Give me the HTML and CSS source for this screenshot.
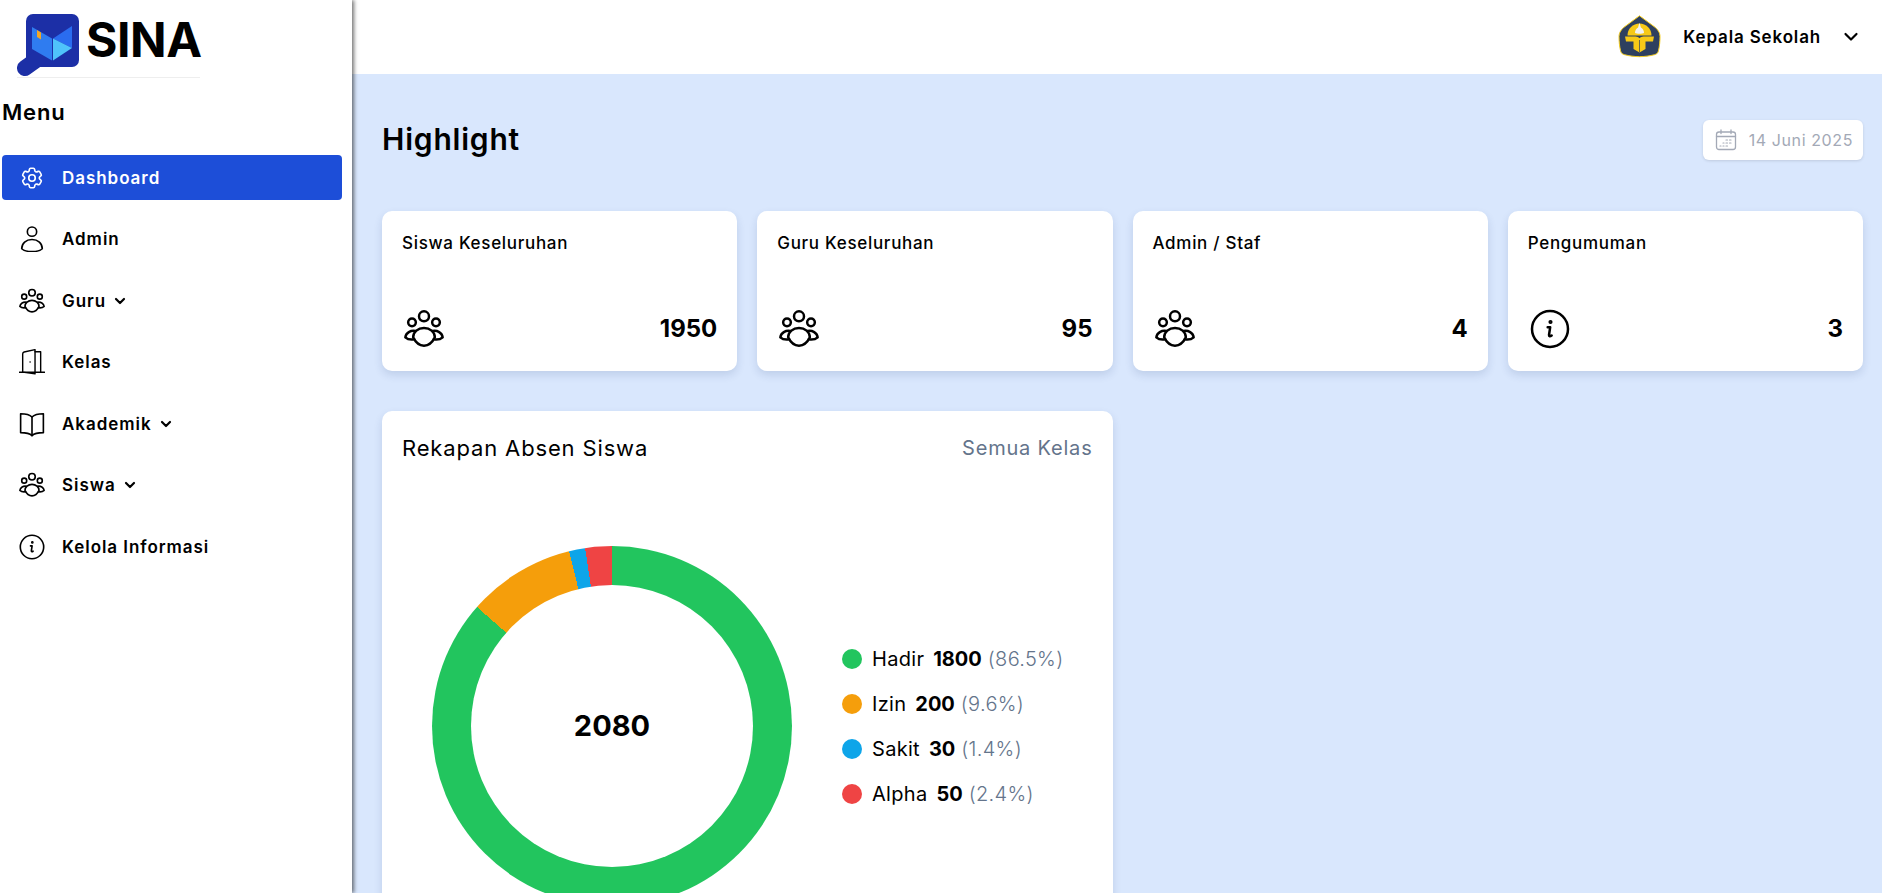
FILE: index.html
```html
<!DOCTYPE html>
<html lang="en">
<head>
  <meta charset="UTF-8">
  <meta name="viewport" content="width=device-width, initial-scale=1.0">
  <title>SINA Dashboard</title>
  <link rel="stylesheet" href="styles.css">
</head>
<body>

  <!-- shared icons -->
  <svg class="icon-defs" aria-hidden="true">
    <symbol id="i-group" viewBox="0 0 24 24" fill="none" stroke="currentColor" stroke-width="1.5" stroke-linecap="round" stroke-linejoin="round">
      <circle cx="12" cy="4.4" r="3"/>
      <circle cx="4.800" cy="8" r="2.300"/>
      <circle cx="19.200" cy="8" r="2.300"/>
      <path d="M5.500 17c0-3.200 2.900-5.600 6.500-5.600s6.500 2.400 6.500 5.600c-1.400 3-3.800 5-6.500 5s-5.100-2-6.500-5z"/>
      <path d="M6.800 13.200c-2.800-.5-5.600 1-6 3.800 1.200 1.100 3.300 1.500 5.300 1.200"/>
      <path d="M17.200 13.200c2.800-.5 5.600 1 6 3.800-1.200 1.100-3.300 1.500-5.300 1.200"/>
    </symbol>
    <symbol id="i-info" viewBox="0 0 24 24" fill="none" stroke="currentColor" stroke-width="1.5" stroke-linecap="round" stroke-linejoin="round">
      <circle cx="12" cy="12" r="10.800"/>
      <path d="M10.600 11h1.500l-.7 4.600c-.1.800.6 1 1.600.3"/>
      <circle cx="12.300" cy="7.800" r=".5" fill="currentColor"/>
    </symbol>
  </svg>

  <div class="app">
    <aside class="sidebar">
      <div class="logo">
        <svg class="logo-mark" viewBox="0 0 63 63">
          <rect x="9" y="0" width="53" height="53" rx="7" fill="#1c2fa6"/>
          <path d="M8 54l14-10" stroke="#1c2fa6" stroke-width="16" stroke-linecap="round"/>
          <path d="M15 13l20 11.500v22L15 35z" fill="#2f7cf0"/>
          <path d="M55 12v22L36 24.500z" fill="#2a6cf0"/>
          <path d="M36 24.500L55 34 36 46.500z" fill="#4fc3fb"/>
          <path d="M20 16l4 2.500v7l-4-2.500z" fill="#f5a623"/>
        </svg>
        <span class="logo-text">SINA</span>
      </div>

      <h2 class="menu-title">Menu</h2>

      <nav class="nav">
        <a class="nav-item active">
          <svg class="nav-icon" viewBox="0 0 24 24" fill="none" stroke="currentColor" stroke-width="1.5" stroke-linecap="round" stroke-linejoin="round">
            <path d="M9.594 3.940c.09-.542.56-.94 1.110-.94h2.593c.55 0 1.020.398 1.110.94l.213 1.281c.063.374.313.686.645.870.074.04.147.083.22.127.325.196.72.257 1.075.124l1.217-.456a1.125 1.125 0 0 1 1.370.49l1.296 2.247a1.125 1.125 0 0 1-.26 1.431l-1.003.827c-.293.24-.438.613-.431.992a6.759 6.759 0 0 1 0 .255c-.007.378.138.75.43.99l1.005.828c.424.35.534.954.26 1.430l-1.298 2.247a1.125 1.125 0 0 1-1.369.491l-1.217-.456c-.355-.133-.75-.072-1.076.124a6.570 6.570 0 0 1-.22.128c-.331.183-.581.495-.644.869l-.213 1.280c-.09.543-.56.941-1.110.941h-2.594c-.55 0-1.020-.398-1.110-.94l-.213-1.281c-.062-.374-.312-.686-.644-.870a6.520 6.520 0 0 1-.22-.127c-.325-.196-.72-.257-1.076-.124l-1.217.456a1.125 1.125 0 0 1-1.369-.49l-1.297-2.247a1.125 1.125 0 0 1 .26-1.431l1.004-.827c.292-.24.437-.613.43-.992a6.932 6.932 0 0 1 0-.255c.007-.378-.138-.75-.43-.99l-1.004-.828a1.125 1.125 0 0 1-.26-1.430l1.297-2.247a1.125 1.125 0 0 1 1.370-.491l1.216.456c.356.133.751.072 1.076-.124.072-.044.146-.087.22-.128.332-.183.582-.495.644-.869l.214-1.281z"/>
            <circle cx="12" cy="12" r="3"/>
          </svg>
          <span>Dashboard</span>
        </a>
        <a class="nav-item">
          <svg class="nav-icon" viewBox="0 0 24 24" fill="none" stroke="currentColor" stroke-width="1.5" stroke-linecap="round" stroke-linejoin="round">
            <circle cx="12" cy="5.200" r="4.300"/>
            <path d="M2.500 21c0-5 4-8.500 9.500-8.500s9.500 3.500 9.500 8.500c-2 1.800-6 2.600-9.500 2.600S4.500 22.800 2.500 21z"/>
          </svg>
          <span>Admin</span>
        </a>
        <a class="nav-item">
          <svg class="nav-icon"><use href="#i-group"/></svg>
          <span>Guru</span>
          <svg class="nav-chevron" viewBox="0 0 12 12"><path d="M2 4l4 4 4-4"/></svg>
        </a>
        <a class="nav-item">
          <svg class="nav-icon" viewBox="0 0 24 24" fill="none" stroke="currentColor" stroke-width="1.3" stroke-linecap="round" stroke-linejoin="round">
            <path d="M.3 21.500h23.400"/>
            <path d="M3.400 21.300V4.500c0-1 .4-1.400 1.300-1.700L14.800.6V23l-11.400-1.700"/>
            <path d="M14.800 2.500H20v19"/>
            <path d="M10.200 12h.1"/>
          </svg>
          <span>Kelas</span>
        </a>
        <a class="nav-item">
          <svg class="nav-icon" viewBox="0 0 24 24" fill="none" stroke="currentColor" stroke-width="1.5" stroke-linecap="round" stroke-linejoin="round">
            <path d="M12 5.500C9.500 3 5.500 2.500 1.500 2.500v17.500c4 0 8 .3 10.500 2.700 2.500-2.400 6.500-2.700 10.500-2.700V2.500c-4 0-8 .5-10.500 3z"/>
            <path d="M12 5.500v17.200"/>
          </svg>
          <span>Akademik</span>
          <svg class="nav-chevron" viewBox="0 0 12 12"><path d="M2 4l4 4 4-4"/></svg>
        </a>
        <a class="nav-item">
          <svg class="nav-icon"><use href="#i-group"/></svg>
          <span>Siswa</span>
          <svg class="nav-chevron" viewBox="0 0 12 12"><path d="M2 4l4 4 4-4"/></svg>
        </a>
        <a class="nav-item">
          <svg class="nav-icon"><use href="#i-info"/></svg>
          <span>Kelola Informasi</span>
        </a>
      </nav>
    </aside>

    <div class="page">
      <header class="topbar">
        <svg class="emblem" viewBox="0 0 44 44">
          <path d="M21.500.8L36 11.500c3.500 2.500 6 6 6 10 0 5-.5 10-1.500 14-.5 2.500-1.500 3.500-4 4.200-10 2.600-20 2.600-30 0-2.500-.7-3.500-1.700-4-4.200-1-4-1.500-9-1.500-14 0-4 2.500-7.500 6-10z" fill="#2e405f" stroke="#f5cd1e" stroke-width="1"/>
          <path d="M9.500 20.500a12 12 0 0 1 24 0z" fill="#f7c917"/>
          <path d="M21.500 8c.8 2 1 3 1.400 4.500 2 1 3.100 3 3.100 5.500-1.500 1-7.500 1-9 0 0-2.500 1.100-4.500 3.100-5.500.4-1.500.6-2.500 1.400-4.500z" fill="#f2f2f2"/>
          <path d="M7 21.500h10.500c1.500 0 3 .7 4 1.800 1-1.100 2.500-1.800 4-1.800H36l-1 5h-7.500V34l-6 3.500-6-3.500v-7.500H8z" fill="#f7c917"/>
          <path d="M21.500 25v12" stroke="#2e405f" stroke-width=".7"/>
        </svg>
        <span class="user-name">Kepala Sekolah</span>
        <svg class="user-chevron" viewBox="0 0 16 16"><path d="M2.500 5l5.500 5.500L13.500 5"/></svg>
      </header>

      <main class="content">
        <div class="page-head">
          <h1 class="page-title">Highlight</h1>
          <div class="date-box">
            <svg class="date-icon" viewBox="0 0 22 22" fill="none" stroke="currentColor" stroke-width="1.300" stroke-linecap="round">
              <rect x="1.500" y="3" width="19" height="17.500" rx="2.500"/>
              <path d="M1.500 7.500h19M6 1v3.500M16 1v3.500"/>
              <path d="M11 11h1.500M14.500 11H16M8 14h1M11 14h1.500M14.500 14H16M5 17h1M8 17h1M11 17h1.500" stroke-width="1.200"/>
            </svg>
            <span>14 Juni 2025</span>
          </div>
        </div>

        <section class="stat-grid">
          <div class="card stat-card">
            <p class="stat-label">Siswa Keseluruhan</p>
            <div class="stat-row">
              <svg class="stat-icon"><use href="#i-group"/></svg>
              <span class="stat-value">1950</span>
            </div>
          </div>
          <div class="card stat-card">
            <p class="stat-label">Guru Keseluruhan</p>
            <div class="stat-row">
              <svg class="stat-icon"><use href="#i-group"/></svg>
              <span class="stat-value">95</span>
            </div>
          </div>
          <div class="card stat-card">
            <p class="stat-label">Admin / Staf</p>
            <div class="stat-row">
              <svg class="stat-icon"><use href="#i-group"/></svg>
              <span class="stat-value">4</span>
            </div>
          </div>
          <div class="card stat-card">
            <p class="stat-label">Pengumuman</p>
            <div class="stat-row">
              <svg class="stat-icon"><use href="#i-info"/></svg>
              <span class="stat-value">3</span>
            </div>
          </div>

          <div class="card recap-card">
            <div class="recap-head">
              <h3 class="recap-title">Rekapan Absen Siswa</h3>
              <span class="recap-filter">Semua Kelas</span>
            </div>
            <div class="recap-body">
              <div class="donut">
                <div class="donut-hole">2080</div>
              </div>
              <ul class="legend">
                <li><i class="dot dot-green"></i>Hadir <b>1800</b> <span class="pct">(86.5%)</span></li>
                <li><i class="dot dot-orange"></i>Izin <b>200</b> <span class="pct">(9.6%)</span></li>
                <li><i class="dot dot-blue"></i>Sakit <b>30</b> <span class="pct">(1.4%)</span></li>
                <li><i class="dot dot-red"></i>Alpha <b>50</b> <span class="pct">(2.4%)</span></li>
              </ul>
            </div>
          </div>
        </section>
      </main>
    </div>
  </div>

</body>
</html>
```

FILE: styles.css
```css
* {
  box-sizing: border-box;
}

html,
body {
  height: 100%;
}

body {
  margin: 0;
  overflow: hidden;
  font-family: Inter, "Open Sans", sans-serif;
  color: #000;
  background-color: #d9e7fd;
}

.icon-defs {
  display: none;
}

.app {
  display: flex;
  height: 100%;
}

/* sidebar */
.sidebar {
  flex: 0 0 352px;
  z-index: 2;
  padding: 14px 10px 0 2px;
  background-color: #fff;
  box-shadow: 2px 0 4px rgba(0, 0, 0, 0.55);
}

.logo {
  display: flex;
  align-items: flex-start;
  gap: 6px;
  width: 183px;
  height: 64px;
  margin-left: 15px;
  border-bottom: 1px solid #eee;
}

.logo-mark {
  flex: none;
  width: 63px;
  height: 63px;
}

.logo-text {
  margin-top: 1px;
  font-family: Inter, sans-serif;
  font-size: 48px;
  line-height: 50px;
  font-weight: 700;
  letter-spacing: -0.4px;
}

.menu-title {
  margin: 21px 0 30px;
  font-size: 22px;
  line-height: 26px;
  font-weight: 600;
  letter-spacing: 0.8px;
}

.nav {
  display: flex;
  flex-direction: column;
  gap: 16.6px;
}

.nav-item {
  display: flex;
  align-items: center;
  height: 45px;
  padding-left: 17px;
  border-radius: 4px;
  font-size: 17px;
  font-weight: 600;
  letter-spacing: 0.95px;
}

.nav-item.active {
  color: #fff;
  background-color: #1d4ed8;
}

.nav-icon {
  flex: none;
  width: 26px;
  height: 26px;
  margin-right: 17px;
}

.nav-chevron {
  width: 12px;
  height: 12px;
  margin-left: 8px;
  fill: none;
  stroke: currentColor;
  stroke-width: 2.2;
  stroke-linecap: round;
  stroke-linejoin: round;
}

/* top bar */
.page {
  flex: 1;
  min-width: 0;
  display: flex;
  flex-direction: column;
}

.topbar {
  flex: none;
  display: flex;
  align-items: center;
  justify-content: flex-end;
  height: 74px;
  padding-right: 23px;
  background-color: #fff;
}

.emblem {
  width: 44px;
  height: 44px;
  margin-right: 21px;
}

.user-name {
  font-size: 17px;
  font-weight: 600;
  letter-spacing: 0.85px;
  margin-right: 22px;
}

.user-chevron {
  width: 16px;
  height: 16px;
  fill: none;
  stroke: #000;
  stroke-width: 2.2;
  stroke-linecap: round;
  stroke-linejoin: round;
}

/* content */
.content {
  padding: 46px 19px 0 30px;
}

.page-head {
  display: flex;
  align-items: center;
  justify-content: space-between;
  margin-bottom: 51px;
}

.page-title {
  margin: 0 0 2px;
  font-size: 30px;
  font-weight: 600;
  letter-spacing: 0.8px;
}

.date-box {
  display: flex;
  align-items: center;
  gap: 12px;
  height: 40px;
  padding: 0 10px 0 12px;
  border-radius: 6px;
  font-size: 16px;
  letter-spacing: 0.6px;
  color: #a3a9b6;
  background-color: #fff;
  box-shadow: 0 1px 3px rgba(0, 0, 0, 0.12);
}

.date-icon {
  width: 22px;
  height: 22px;
}

.card {
  border-radius: 10px;
  background-color: #fff;
  box-shadow: 0 4px 8px rgba(30, 58, 110, 0.14);
}

.stat-grid {
  display: grid;
  grid-template-columns: repeat(4, 1fr);
  gap: 40px 20px;
}

.stat-card {
  display: flex;
  flex-direction: column;
  justify-content: space-between;
  height: 160px;
  padding: 20px 20px 22px;
}

.stat-label {
  margin: 0;
  font-size: 17px;
  line-height: 24px;
  font-weight: 500;
  letter-spacing: 0.7px;
}

.stat-row {
  display: flex;
  align-items: center;
  justify-content: space-between;
}

.stat-icon {
  width: 40px;
  height: 40px;
  margin-left: 2px;
}

.stat-value {
  margin-bottom: 2px;
  font-size: 24px;
  font-weight: 700;
}

.recap-card {
  grid-column: span 2;
  height: 700px;
  padding: 22px 20px;
}

.recap-head {
  display: flex;
  align-items: center;
  justify-content: space-between;
}

.recap-title {
  margin: 0;
  font-size: 22px;
  line-height: 30px;
  font-weight: 400;
  letter-spacing: 0.85px;
}

.recap-filter {
  font-size: 20px;
  letter-spacing: 0.8px;
  color: #64748b;
}

.recap-body {
  display: flex;
  align-items: center;
  gap: 50px;
  margin: 83px 0 0 30px;
}

.donut {
  flex: none;
  display: flex;
  align-items: center;
  justify-content: center;
  width: 360px;
  height: 360px;
  border-radius: 50%;
  background: conic-gradient(#22c55e 0 311.4deg, #f59e0b 311.4deg 346.2deg, #0ea5e9 346.2deg 351.4deg, #ef4444 351.4deg 360deg);
}

.donut-hole {
  display: flex;
  align-items: center;
  justify-content: center;
  width: 282px;
  height: 282px;
  padding-bottom: 2px;
  border-radius: 50%;
  font-size: 29px;
  font-weight: 700;
  background-color: #fff;
}

.legend {
  display: flex;
  flex-direction: column;
  gap: 18px;
  margin: 0;
  padding: 0;
  list-style-type: none;
}

.legend li {
  display: flex;
  align-items: center;
  gap: 8px;
  height: 27px;
  font-size: 20px;
  letter-spacing: 0.3px;
}

.legend b {
  margin-left: 1px;
  font-weight: 700;
  letter-spacing: 0;
}

.dot {
  width: 20px;
  height: 20px;
  margin-right: 2px;
  border-radius: 50%;
}

.dot-green {
  background-color: #22c55e;
}

.dot-orange {
  background-color: #f59e0b;
}

.dot-blue {
  background-color: #0ea5e9;
}

.dot-red {
  background-color: #ef4444;
}

.pct {
  margin-left: -2px;
  font-weight: 300;
  color: #64748b;
}
```
